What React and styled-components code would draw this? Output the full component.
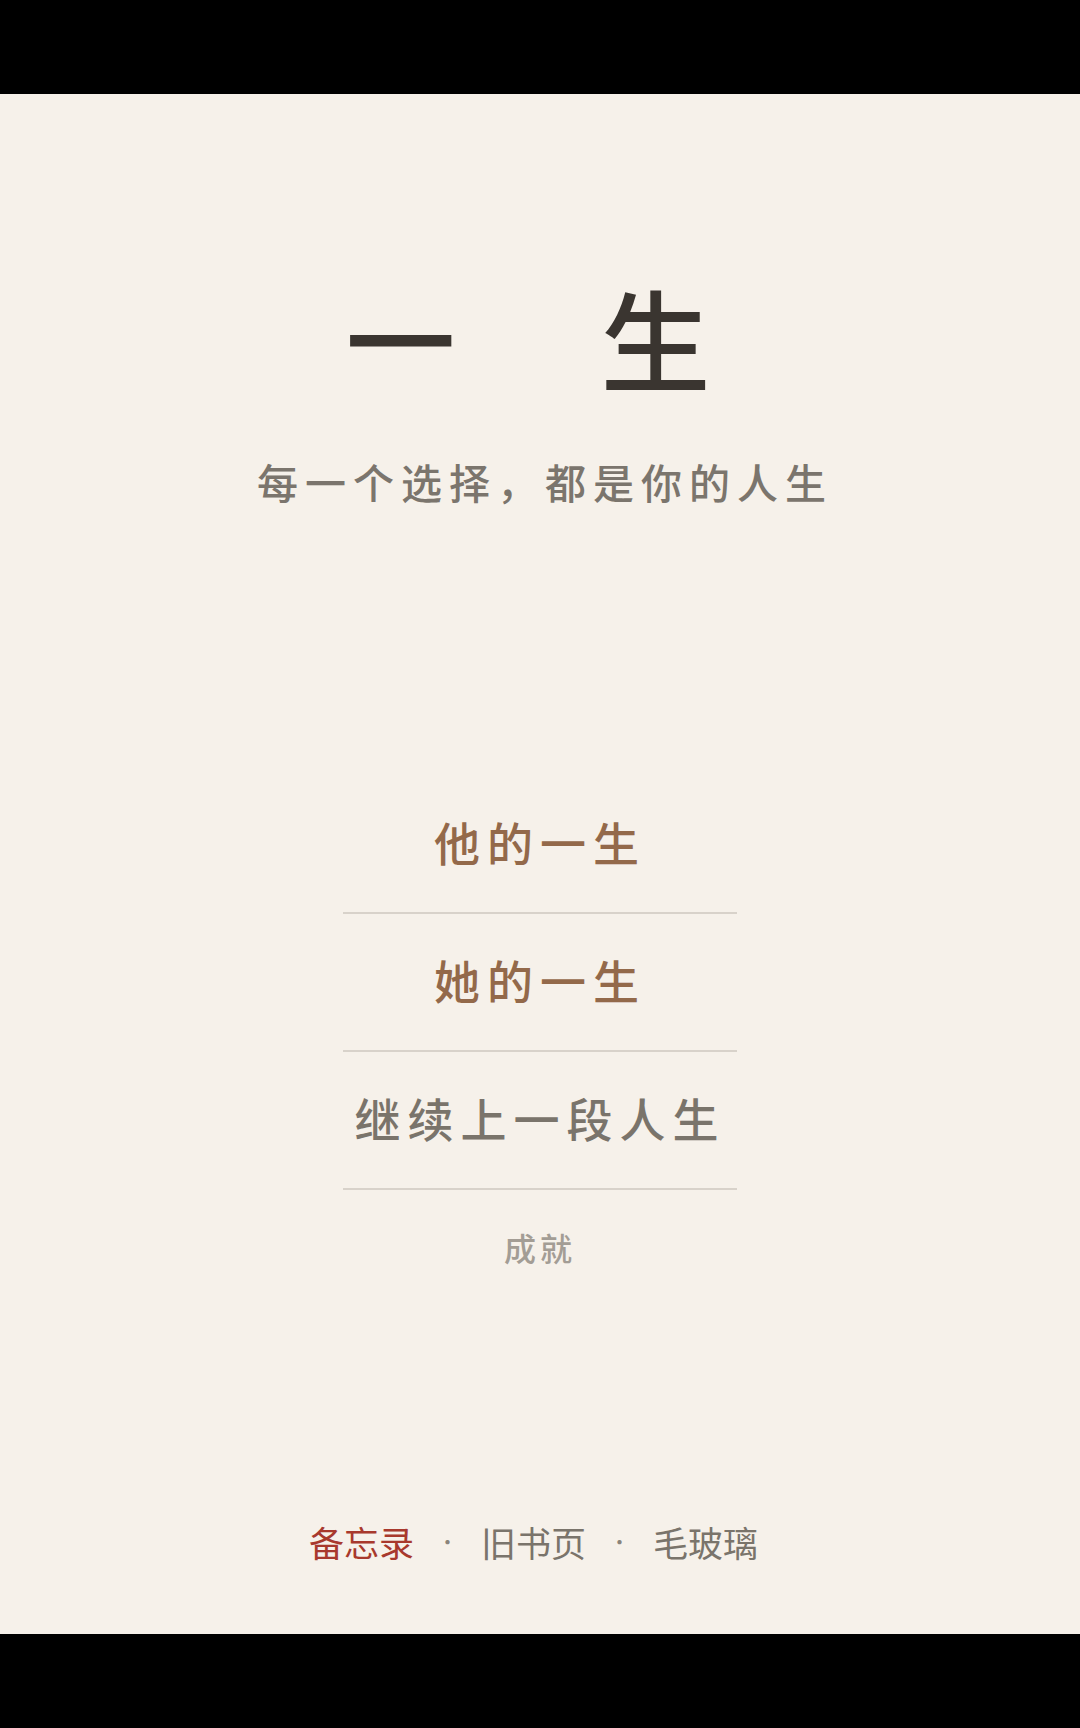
import styled, { createGlobalStyle } from "styled-components";

const GlobalStyle = createGlobalStyle`
  html, body {
    margin: 0;
    padding: 0;
    background: #000;
  }
  * {
    box-sizing: border-box;
  }
`;

const Screen = styled.div`
  width: 1080px;
  height: 1728px;
  display: flex;
  flex-direction: column;
  font-family: "Noto Sans CJK SC", "Noto Sans", sans-serif;
  font-weight: 500;
  background: #000;
`;

const SystemBar = styled.div`
  height: 94px;
  flex-shrink: 0;
  background: #000;
`;

const Paper = styled.main`
  flex: 1;
  display: flex;
  flex-direction: column;
  align-items: center;
  background: #f6f1ea;
  padding: 176px 0 68px;
`;

const Title = styled.h1`
  margin: 0;
  display: flex;
  gap: 145px;
  padding-right: 24px;
  font-size: 110px;
  line-height: 132px;
  font-weight: 500;
  color: #3a3530;
`;

const TitleChar = styled.span`
  display: block;
  width: 1em;
  text-align: center;
`;

const Subtitle = styled.p`
  margin: 51px 0 0;
  padding-left: 10px;
  font-size: 41px;
  line-height: 57px;
  letter-spacing: 7px;
  color: #7b756d;
`;

const Menu = styled.nav`
  margin-top: 266px;
  width: 394px;
  display: flex;
  flex-direction: column;
`;

const MenuItem = styled.button`
  height: 138px;
  border: none;
  border-bottom: 2px solid #d8d2ca;
  background: transparent;
  padding: 0 0 7px;
  font-family: inherit;
  font-weight: 500;
  font-size: 46px;
  letter-spacing: 7px;
  color: ${(p) => (p.$muted ? "#7a746b" : "#93694a")};
  cursor: pointer;
`;

const Achievements = styled.a`
  margin-top: 35px;
  font-size: 32px;
  line-height: 45px;
  letter-spacing: 4px;
  color: #a39d95;
  cursor: pointer;
`;

const Footer = styled.footer`
  margin-top: auto;
  display: flex;
  align-items: center;
  padding-right: 13px;
  font-size: 35px;
  line-height: 49px;
  font-weight: 400;
`;

const Theme = styled.span`
  color: ${(p) => (p.$active ? "#a8392d" : "#7a746b")};
  cursor: pointer;
`;

const Dot = styled.span`
  width: 67px;
  text-align: center;
  color: #8a847b;
  font-size: 20px;
`;

const themes = ["备忘录", "旧书页", "毛玻璃"];

export default function App() {
  return (
    <Screen>
      <GlobalStyle />
      <SystemBar />
      <Paper>
        <Title>
          <TitleChar>一</TitleChar>
          <TitleChar>生</TitleChar>
        </Title>
        <Subtitle>每一个选择，都是你的人生</Subtitle>
        <Menu>
          <MenuItem>他的一生</MenuItem>
          <MenuItem>她的一生</MenuItem>
          <MenuItem $muted>继续上一段人生</MenuItem>
        </Menu>
        <Achievements>成就</Achievements>
        <Footer>
          {themes.map((t, i) => (
            <span key={t} style={{ display: "contents" }}>
              {i > 0 && <Dot>·</Dot>}
              <Theme $active={i === 0}>{t}</Theme>
            </span>
          ))}
        </Footer>
      </Paper>
      <SystemBar />
    </Screen>
  );
}
